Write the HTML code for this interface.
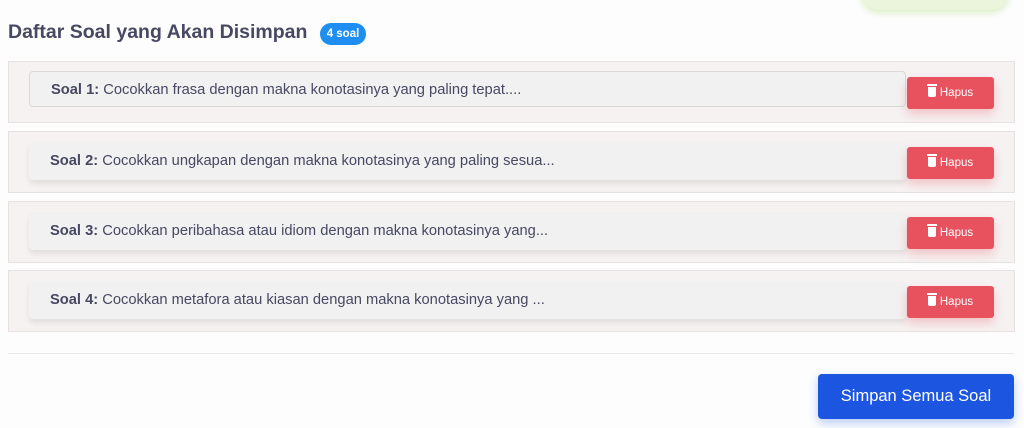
<!DOCTYPE html><html><head><style>
body{margin:0;width:1024px;height:428px;background:#fdfdfd;font-family:"Liberation Sans",sans-serif;position:relative;overflow:hidden;color:#474862}
.blob{position:absolute;left:862px;top:-22px;width:146px;height:32px;border-radius:16px;background:#eaf5dc;box-shadow:0 2px 8px #d5ecbc}
h2{position:absolute;left:8px;top:21px;margin:0;font-size:19.5px;font-weight:bold;color:#474862}
.badge{position:absolute;left:320px;top:23px;width:46px;height:22px;border-radius:11px;background:#1e8ff0;color:#fff;font-size:11.5px;font-weight:bold;line-height:22px;text-align:center}
.row{position:absolute;left:8px;width:1005px;height:60px;background:#f6f2f2;border:1px solid #e6e2e2}
.inner{position:absolute;left:20px;top:9px;width:877px;height:36px;background:#f1f1f1;border-radius:4px;box-shadow:0 4px 6px rgba(0,0,0,.08);font-size:14.7px;line-height:36px;padding-left:21px;box-sizing:border-box;white-space:nowrap}
.r1 .inner{border:1px solid #d9d9d9;box-shadow:none}
.row:not(.r1) .inner{top:10px;height:38px;line-height:38px}
.inner b{color:#474862}
.btn{position:absolute;left:898px;top:15px;width:87px;height:32px;border-radius:3px;background:#e8525f;color:#fff;font-size:11.5px;line-height:32px;text-align:center;box-shadow:0 5px 10px rgba(232,82,95,.3)}
.btn i{display:inline-block;width:8px;height:10px;background:#fff;border-radius:0 0 2px 2px;vertical-align:-1px;margin-right:4px;position:relative}
.btn i:before{content:"";position:absolute;left:-1px;top:-3px;width:10px;height:2px;background:#fff}
.hr{position:absolute;left:8px;top:353px;width:1006px;height:1px;background:#eceaea}
.save{position:absolute;left:818px;top:374px;width:196px;height:45px;border-radius:4px;background:#1c55e0;color:#fff;font-size:16.5px;line-height:45px;text-align:center;box-shadow:0 4px 10px rgba(28,85,224,.3)}
</style></head><body>
<div class="blob"></div>
<h2>Daftar Soal yang Akan Disimpan</h2><div class="badge">4 soal</div>
<div class="row r1" style="top:61px"><div class="inner"><b>Soal 1:</b> Cocokkan frasa dengan makna konotasinya yang paling tepat....</div><div class="btn"><i></i>Hapus</div></div>
<div class="row" style="top:131px"><div class="inner"><b>Soal 2:</b> Cocokkan ungkapan dengan makna konotasinya yang paling sesua...</div><div class="btn"><i></i>Hapus</div></div>
<div class="row" style="top:201px"><div class="inner"><b>Soal 3:</b> Cocokkan peribahasa atau idiom dengan makna konotasinya yang...</div><div class="btn"><i></i>Hapus</div></div>
<div class="row" style="top:270px"><div class="inner"><b>Soal 4:</b> Cocokkan metafora atau kiasan dengan makna konotasinya yang ...</div><div class="btn"><i></i>Hapus</div></div>
<div class="hr"></div>
<div class="save">Simpan Semua Soal</div>
</body></html>
